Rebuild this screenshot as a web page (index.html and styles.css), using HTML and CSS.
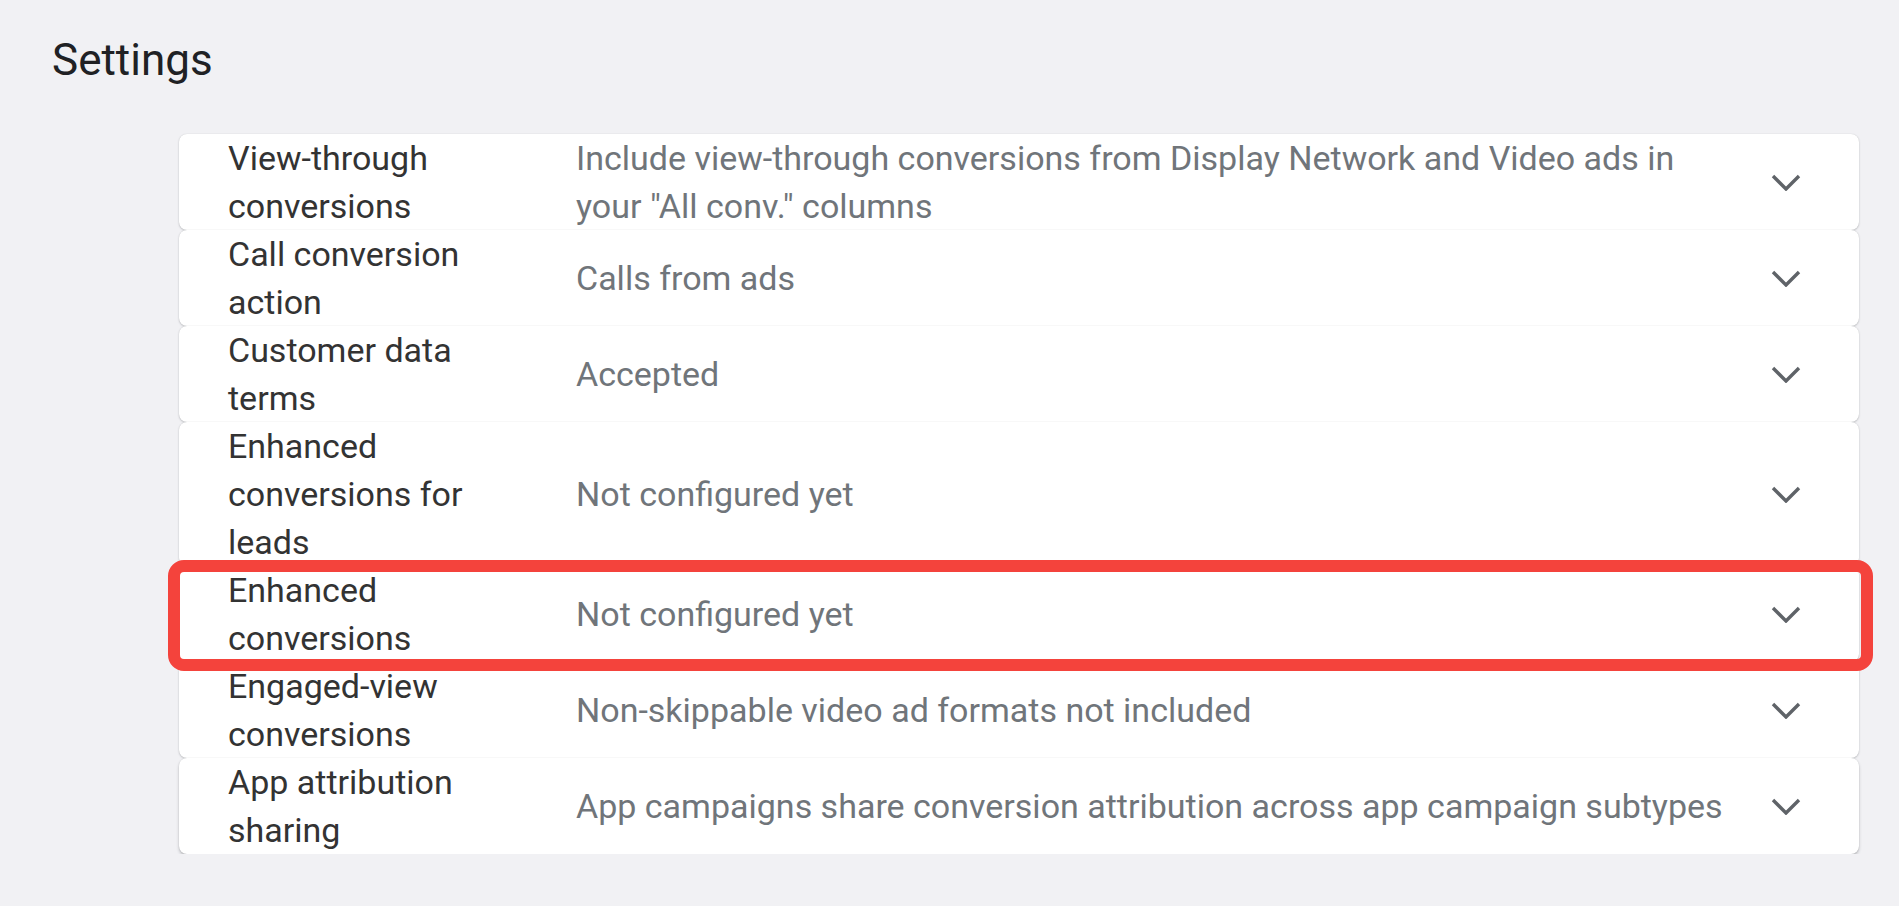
FILE: index.html
```html
<!DOCTYPE html>
<html lang="en">
<head>
  <meta charset="UTF-8" />
  <meta name="viewport" content="width=device-width, initial-scale=1.0"/>
  <title>Settings</title>
  <link rel="stylesheet" href="styles.css">
</head>
<body>
  <h1 class="page-title">Settings</h1>

  <div class="settings-list">
    <div class="setting-row">
      <div class="setting-label">View-through conversions</div>
      <div class="setting-value">Include view-through conversions from Display Network and Video ads in your "All conv." columns</div>
      <svg class="chevron" viewBox="0 0 30 17"><polyline points="2,2 15,15 28,2"/></svg>
    </div>
    <div class="setting-row">
      <div class="setting-label">Call conversion action</div>
      <div class="setting-value">Calls from ads</div>
      <svg class="chevron" viewBox="0 0 30 17"><polyline points="2,2 15,15 28,2"/></svg>
    </div>
    <div class="setting-row">
      <div class="setting-label">Customer data terms</div>
      <div class="setting-value">Accepted</div>
      <svg class="chevron" viewBox="0 0 30 17"><polyline points="2,2 15,15 28,2"/></svg>
    </div>
    <div class="setting-row">
      <div class="setting-label">Enhanced conversions for leads</div>
      <div class="setting-value">Not configured yet</div>
      <svg class="chevron" viewBox="0 0 30 17"><polyline points="2,2 15,15 28,2"/></svg>
    </div>
    <div class="setting-row">
      <div class="setting-label">Enhanced conversions</div>
      <div class="setting-value">Not configured yet</div>
      <svg class="chevron" viewBox="0 0 30 17"><polyline points="2,2 15,15 28,2"/></svg>
      <div class="highlight"></div>
    </div>
    <div class="setting-row">
      <div class="setting-label">Engaged-view conversions</div>
      <div class="setting-value">Non-skippable video ad formats not included</div>
      <svg class="chevron" viewBox="0 0 30 17"><polyline points="2,2 15,15 28,2"/></svg>
    </div>
    <div class="setting-row">
      <div class="setting-label">App attribution sharing</div>
      <div class="setting-value">App campaigns share conversion attribution across app campaign subtypes</div>
      <svg class="chevron" viewBox="0 0 30 17"><polyline points="2,2 15,15 28,2"/></svg>
    </div>
  </div>
</body>
</html>
```

FILE: styles.css
```css
body {
  margin: 0;
  background: #f1f1f4;
  font-family: Roboto, "Liberation Sans", Arial, sans-serif;
  color: #3c4043;
}

.page-title {
  margin: 0;
  padding: 38px 0 0 52px;
  font-size: 44px;
  line-height: 44px;
  font-weight: 400;
  color: #202124;
}

.settings-list {
  margin: 52px 40px 0 179px;
  width: 1680px;
}

.setting-row {
  position: relative;
  display: flex;
  align-items: center;
  min-height: 96px;
  padding-left: 49px;
  background: #fff;
  border-radius: 8px;
  box-shadow: 0 1px 2px rgba(60, 64, 67, 0.25), 0 0 1px rgba(60, 64, 67, 0.2);
  font-size: 34px;
  line-height: 48px;
}

.setting-row:last-child {
  box-shadow: 0 2px 3px rgba(60, 64, 67, 0.3), 0 0 1px rgba(60, 64, 67, 0.2);
}

.setting-label {
  flex: 0 0 270px;
  margin-right: 78px;
  color: #333;
}

.setting-value {
  flex: 0 0 1158px;
  color: #70757a;
}

.chevron {
  flex: 0 0 30px;
  height: 17px;
  margin-left: 37px;
  fill: none;
  stroke: #5f6368;
  stroke-width: 3.4;
}

.highlight {
  position: absolute;
  top: -6px;
  left: -11px;
  right: -14px;
  bottom: -9px;
  border: 12px solid #f4433c;
  border-radius: 16px;
  z-index: 2;
  pointer-events: none;
}
```
